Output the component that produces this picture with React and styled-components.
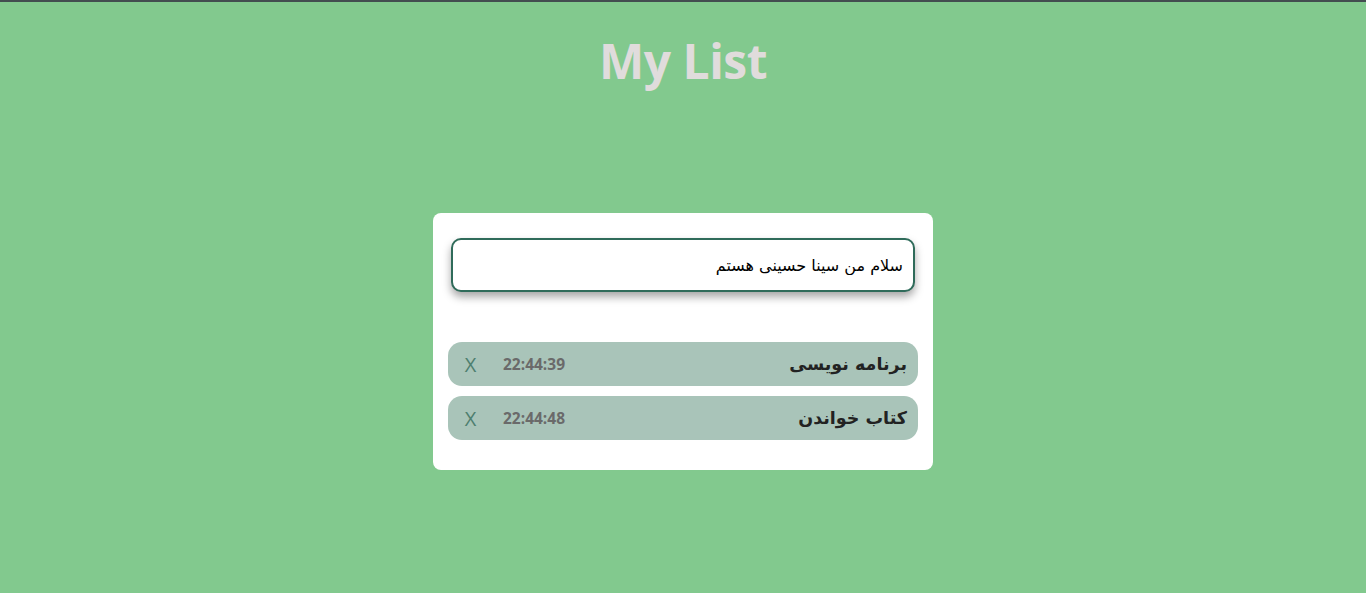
import React, { useState } from 'react';
import styled, { createGlobalStyle } from 'styled-components';

const GlobalStyle = createGlobalStyle`
  html, body {
    margin: 0;
    padding: 0;
  }
  body {
    background: #82c98e;
    border-top: 2px solid #434d50;
    min-height: 591px;
    font-family: "Open Sans", "DejaVu Sans", sans-serif;
  }
`;

const Page = styled.main`
  display: flex;
  flex-direction: column;
  align-items: center;
`;

const Title = styled.h1`
  margin: 26px 0 0;
  font-family: "Open Sans", sans-serif;
  font-size: 48px;
  font-weight: 700;
  line-height: 66px;
  color: #e0dcdc;
  letter-spacing: -0.5px;
`;

const Card = styled.section`
  margin-top: 119px;
  width: 500px;
  box-sizing: border-box;
  background: #fff;
  border-radius: 8px;
  padding: 25px 15px 30px;
`;

const Input = styled.input`
  display: block;
  box-sizing: border-box;
  width: 464px;
  height: 54px;
  margin: 0 3px 50px;
  padding: 0 10px;
  border: 2px solid #2f6b5a;
  border-radius: 10px;
  box-shadow: 0 5px 8px rgba(0, 0, 0, 0.35);
  direction: rtl;
  font-family: "DejaVu Sans", sans-serif;
  font-size: 16px;
  color: #000;
  outline: none;
`;

const List = styled.ul`
  list-style: none;
  margin: 0;
  padding: 0;
  display: flex;
  flex-direction: column;
  gap: 10px;
`;

const Item = styled.li`
  display: flex;
  align-items: center;
  height: 44px;
  padding: 0 11px 0 15px;
  background: #a9c4b9;
  border-radius: 14px;
`;

const Remove = styled.button`
  border: 0;
  background: none;
  padding: 0;
  font-family: "Open Sans", sans-serif;
  font-size: 20px;
  color: #4e7f6f;
  cursor: pointer;
  width: 15px;
`;

const Time = styled.span`
  margin-left: 25px;
  font-family: "Open Sans", sans-serif;
  font-size: 15.5px;
  font-weight: 700;
  color: #6a6a6a;
`;

const Text = styled.span`
  margin-left: auto;
  direction: rtl;
  font-family: "DejaVu Sans", sans-serif;
  font-size: 17.5px;
  font-weight: 700;
  color: #222;
`;

export default function App() {
  const [value, setValue] = useState('سلام من سینا حسینی هستم');
  const items = [
    { text: 'برنامه نویسی', time: '22:44:39' },
    { text: 'کتاب خواندن', time: '22:44:48' },
  ];
  return (
    <>
      <GlobalStyle />
      <Page>
        <Title>My List</Title>
        <Card>
          <Input value={value} onChange={(e) => setValue(e.target.value)} />
          <List>
            {items.map((item, i) => (
              <Item key={i}>
                <Remove>X</Remove>
                <Time>{item.time}</Time>
                <Text>{item.text}</Text>
              </Item>
            ))}
          </List>
        </Card>
      </Page>
    </>
  );
}
